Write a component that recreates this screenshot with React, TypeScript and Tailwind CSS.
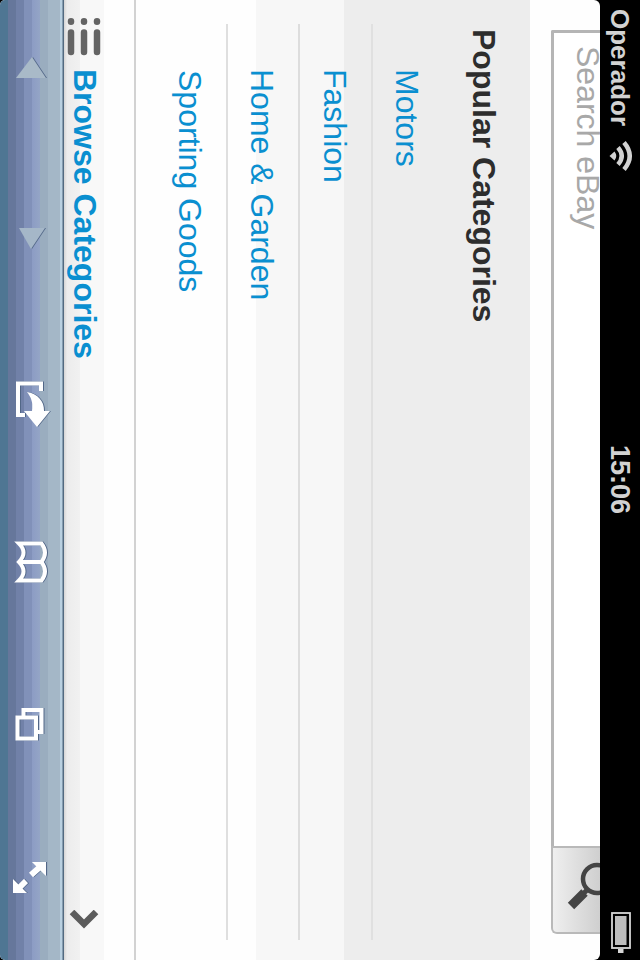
import React from "react";

const categories = [
  { name: "Motors", row: "h-[73px] pt-[19px] border-[#e0e0e0]" },
  { name: "Fashion", row: "h-[73px] pt-[18px] border-[#dddddd]" },
  { name: "Home & Garden", row: "h-[72px] pt-[18px] border-[#dfdfdf]" },
];

function StatusBar() {
  return (
    <header className="flex h-10 items-center bg-black text-[#d2d2d2]">
      <span className="ml-[9px] w-[118px] text-[26px] leading-10 font-bold whitespace-nowrap">
        Operador
      </span>
      <svg className="ml-[13px] h-10 w-8" viewBox="0 0 32 40" fill="none" stroke="currentColor">
        <path d="M16 30.500 L11.500 25.500 Q16 22 20.500 25.500 Z" fill="currentColor" stroke="none" />
        <path d="M7.500 22 Q16 14.500 24.500 22" strokeWidth="4.500" />
        <path d="M2.500 16 Q16 4.500 29.500 16" strokeWidth="4.500" />
      </svg>
      <span className="ml-[273px] w-[72px] text-[27px] leading-10 font-bold">15:06</span>
      <svg className="ml-[393px] h-10 w-[46px]" viewBox="0 0 46 40">
        <rect x="3" y="10" width="35" height="18" fill="#000" stroke="#d6d6d6" strokeWidth="1.8" />
        <rect x="6" y="13.5" width="29" height="11.5" fill="#bdbdbd" />
        <path d="M39 16.5H43V22H39" fill="#d6d6d6" />
      </svg>
    </header>
  );
}

function SearchBar() {
  return (
    <div className="flex h-[70px] px-[30px]">
      <div className="flex h-[49px] w-[904px]">
        <div className="h-[49px] w-[816px] overflow-hidden rounded-bl-[2px] border-b-3 border-l-3 border-[#b5b5b5] bg-white pl-[13px]">
          <span className="-mt-[6px] block text-[32px] leading-9 text-[#a8a8a8]">Search eBay</span>
        </div>
        <div className="h-[49px] w-[88px] rounded-br-md border-r-2 border-b-2 border-l-2 border-[#b9b9b9] bg-linear-to-b from-[#cfcfcf] to-[#efefef]">
          <svg className="h-[47px] w-[84px]" viewBox="0 0 84 47" fill="none" stroke="#444">
            <circle cx="31" cy="3" r="14" strokeWidth="4.5" />
            <path d="M41 12L46 17" strokeWidth="5" />
            <path d="M44.5 15.5L58 29" strokeWidth="9" />
          </svg>
        </div>
      </div>
    </div>
  );
}

function Categories() {
  return (
    <section className="h-[396px] border-b-2 border-[#d2d2d2] bg-[linear-gradient(to_bottom,#ededed_186px,#f7f7f7_186px,#f7f7f7_274px,#fefefe_274px)] px-6 pt-7">
      <h1 className="h-[58px] pl-[5px] text-[32px] leading-9 font-bold text-[#2d2d2d]">
        Popular Categories
      </h1>
      <ul className="text-[32px] leading-9 text-[#0a8fd0]">
        {categories.map((c) => (
          <li key={c.name} className={`w-[916px] border-b-2 pl-[45px] ${c.row}`}>
            {c.name}
          </li>
        ))}
        <li className="h-[73px] pt-[18px] pl-[46px]">Sporting Goods</li>
      </ul>
    </section>
  );
}

function BrowseRow() {
  return (
    <div className="mt-[30px] flex h-10 bg-[linear-gradient(to_bottom,#f8f8f8_24px,#f1f1f1_24px,#ececec_37px,#d5d5d5_40px)]">
      <svg className="ml-4 h-10 w-[42px]" viewBox="0 0 42 40" stroke="#646464" strokeWidth="6.5" strokeLinecap="round">
        <path d="M5.2 7H5.8M5.2 20H5.8M5.2 33H5.8M16.5 7H36M16.5 20H36M16.5 33H36" />
      </svg>
      <span className="mt-px ml-[11px] flex-1 text-[32px] leading-9 font-bold text-[#0a8fd0]">
        Browse Categories
      </span>
      <svg className="mr-[26px] h-10 w-6" viewBox="0 0 24 40" fill="none" stroke="#5c5c5c" strokeWidth="6.5">
        <path d="M2 8L14 20L2 32" />
      </svg>
    </div>
  );
}

function Toolbar() {
  const icon = "h-16 w-12 shrink-0 overflow-visible drop-shadow-[0_-1px_0_#526787]";
  return (
    <nav className="flex h-16 bg-[linear-gradient(to_bottom,#526a80_0px,#526a80_1px,#b9d0e0_2px,#b9d0e0_4px,#a4b7c7_4px,#a4b7c7_16px,#9aadbf_16px,#9aadbf_24px,#94a5c6_24px,#8c9cc4_32px,#8191b9_32px,#8191b9_40px,#7181a8_40px,#7181a8_48px,#66779b_48px,#66779b_56px,#4f7693_56px)]">
      <svg className={`ml-[44px] ${icon}`} viewBox="0 0 48 64">
        <path d="M13 32L34 18V48Z" fill="#a9bac8" />
      </svg>
      <svg className={`ml-[122px] ${icon}`} viewBox="0 0 48 64">
        <path d="M35 33L14 45V19Z" fill="#a5b7c8" />
      </svg>
      <svg className={`ml-[117px] ${icon}`} viewBox="0 0 48 64">
        <path d="M12 23H4.5V46H36V39" fill="none" stroke="#fff" strokeWidth="4" />
        <path d="M13 37C15 26 22 20 32 20V14L48 27L32 40V32C24 31 19 32 13 37Z" fill="#fff" />
      </svg>
      <svg className={`ml-[111px] ${icon}`} viewBox="0 0 48 64">
        <path
          d="M5.5 22.5Q14.5 15.500 24 22.500Q33.500 15.500 42.500 22.500V45Q33.500 36 24 45Q14.500 36 5.500 45ZM24 22V45"
          fill="none"
          stroke="#fff"
          strokeWidth="4"
        />
      </svg>
      <svg className={`ml-[114px] ${icon}`} viewBox="0 0 48 64" fill="none" stroke="#fff" strokeWidth="4">
        <path d="M16 40.500H10V22.500H32V26" />
        <rect x="17.500" y="28" width="21" height="18.500" />
      </svg>
      <svg className={`ml-[105px] ${icon}`} viewBox="0 0 48 64" fill="#fff" stroke="#fff">
        <path d="M9 18H23L9 32ZM40 51H26L40 37Z" stroke="none" />
        <path d="M14 24L22 33M28 38L35 45" strokeWidth="6" />
      </svg>
    </nav>
  );
}

export default function App() {
  return (
    <div className="h-[960px] w-[640px] overflow-hidden bg-black">
      <div className="h-[640px] w-[960px] origin-top-left translate-x-[640px] rotate-90 bg-black font-['Liberation_Sans',Arial,sans-serif]">
        <StatusBar />
        <main className="h-[600px] overflow-hidden rounded-t-[6px] rounded-b-[5px] bg-[#fefefe]">
          <SearchBar />
          <Categories />
          <BrowseRow />
          <Toolbar />
        </main>
      </div>
    </div>
  );
}
